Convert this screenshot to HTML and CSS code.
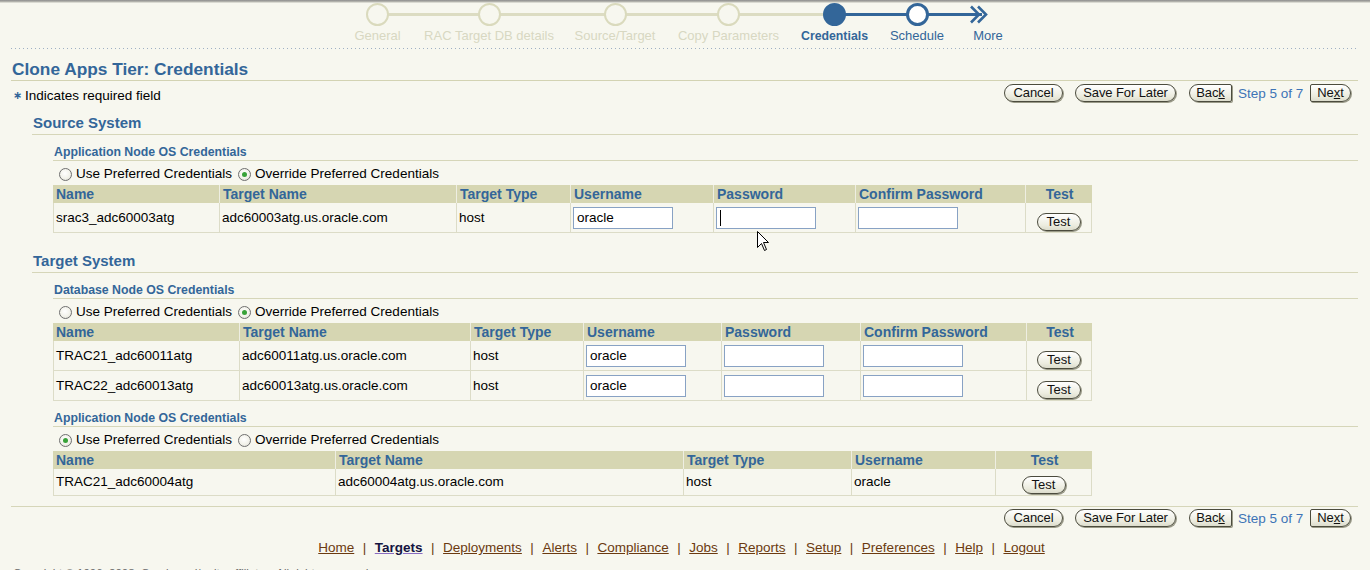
FILE: index.html
```html
<!DOCTYPE html>
<html>
<head>
<meta charset="utf-8">
<title>Clone Apps Tier: Credentials</title>
<link rel="stylesheet" href="styles.css">
</head>
<body>
<div class="train">
  <div class="steps">
    <div class="step s1 done first"><span class="dot"></span><span class="lbl">General</span></div>
    <div class="step s2 done"><span class="dot"></span><span class="lbl">RAC Target DB details</span></div>
    <div class="step s3 done"><span class="dot"></span><span class="lbl">Source/Target</span></div>
    <div class="step s4 done"><span class="dot"></span><span class="lbl">Copy Parameters</span></div>
    <div class="step s5 current"><span class="dot"></span><span class="lbl">Credentials</span></div>
    <div class="step s6 next"><span class="dot"></span><span class="lbl">Schedule</span></div>
    <div class="step s7 more">
      <svg class="chev" width="20" height="23" viewBox="0 0 20 23"><path d="M2 3.5 L10 11.5 L2 19.5 M9 3.5 L17 11.5 L9 19.5" fill="none" stroke="#336699" stroke-width="2.6"/></svg>
      <span class="lbl">More</span>
    </div>
  </div>
</div>
<div class="dots"></div>

<div class="page">
  <h1 class="title">Clone Apps Tier: Credentials</h1>
  <div class="actions top">
    <div class="req"><span class="star">&#8727;</span>Indicates required field</div>
    <div class="btns">
      <span class="btn cancel">Cancel</span>
      <span class="btn save">Save For Later</span>
      <div class="nav">
        <span class="btn back">Bac<u>k</u></span>
        <span class="stepof">Step 5 of 7</span>
        <span class="btn nxt">Ne<u>x</u>t</span>
      </div>
    </div>
  </div>

  <h2 class="sec first-sec">Source System</h2>
  <div class="subsec">
    <h3 class="sub">Application Node OS Credentials</h3>
    <div class="radios">
      <label class="rad"><span class="r"></span>Use Preferred Credentials</label>
      <label class="rad"><span class="r on"></span>Override Preferred Credentials</label>
    </div>
    <table class="grid">
      <colgroup><col class="w167"><col class="w237"><col class="w114"><col class="w143"><col class="w142"><col class="w170"><col class="w66"></colgroup>
      <tr><th>Name</th><th>Target Name</th><th>Target Type</th><th>Username</th><th>Password</th><th>Confirm Password</th><th class="c">Test</th></tr>
      <tr class="tall"><td>srac3_adc60003atg</td><td>adc60003atg.us.oracle.com</td><td>host</td><td><span class="inp">oracle</span></td><td><span class="inp"><span class="caret"></span></span></td><td><span class="inp"></span></td><td class="test"><span class="tbtn">Test</span></td></tr>
    </table>
  </div>

  <h2 class="sec">Target System</h2>
  <div class="subsec">
    <h3 class="sub">Database Node OS Credentials</h3>
    <div class="radios">
      <label class="rad"><span class="r"></span>Use Preferred Credentials</label>
      <label class="rad"><span class="r on"></span>Override Preferred Credentials</label>
    </div>
    <table class="grid">
      <colgroup><col class="w187"><col class="w231"><col class="w113"><col class="w138"><col class="w139"><col class="w166"><col class="w65"></colgroup>
      <tr><th>Name</th><th>Target Name</th><th>Target Type</th><th>Username</th><th>Password</th><th>Confirm Password</th><th class="c">Test</th></tr>
      <tr class="tall"><td>TRAC21_adc60011atg</td><td>adc60011atg.us.oracle.com</td><td>host</td><td><span class="inp">oracle</span></td><td><span class="inp"></span></td><td><span class="inp"></span></td><td class="test"><span class="tbtn">Test</span></td></tr>
      <tr class="tall"><td>TRAC22_adc60013atg</td><td>adc60013atg.us.oracle.com</td><td>host</td><td><span class="inp">oracle</span></td><td><span class="inp"></span></td><td><span class="inp"></span></td><td class="test"><span class="tbtn">Test</span></td></tr>
    </table>

    <h3 class="sub">Application Node OS Credentials</h3>
    <div class="radios">
      <label class="rad"><span class="r on"></span>Use Preferred Credentials</label>
      <label class="rad"><span class="r"></span>Override Preferred Credentials</label>
    </div>
    <table class="grid">
      <colgroup><col class="w283"><col class="w348"><col class="w168"><col class="w144"><col class="w96"></colgroup>
      <tr><th>Name</th><th>Target Name</th><th>Target Type</th><th>Username</th><th class="c">Test</th></tr>
      <tr class="short"><td>TRAC21_adc60004atg</td><td>adc60004atg.us.oracle.com</td><td>host</td><td>oracle</td><td class="test"><span class="tbtn">Test</span></td></tr>
    </table>
  </div>

  <div class="actions bottom">
    <div class="btns">
      <span class="btn cancel">Cancel</span>
      <span class="btn save">Save For Later</span>
      <div class="nav">
        <span class="btn back">Bac<u>k</u></span>
        <span class="stepof">Step 5 of 7</span>
        <span class="btn nxt">Ne<u>x</u>t</span>
      </div>
    </div>
  </div>

  <div class="links">
    <a>Home</a><span class="sep">|</span><a class="cur">Targets</a><span class="sep">|</span><a>Deployments</a><span class="sep">|</span><a>Alerts</a><span class="sep">|</span><a>Compliance</a><span class="sep">|</span><a>Jobs</a><span class="sep">|</span><a>Reports</a><span class="sep">|</span><a>Setup</a><span class="sep">|</span><a>Preferences</a><span class="sep">|</span><a>Help</a><span class="sep">|</span><a>Logout</a>
  </div>
  <div class="copy">Copyright &copy; 1996, 2008, Oracle and/or its affiliates. All rights reserved.</div>
</div>

<svg class="pointer" width="13" height="21" viewBox="0 0 13 21"><path d="M0.5 0.5 L0.5 16.5 L4.5 12.5 L7.5 19.5 L9.5 18.5 L6.5 11.5 L11.5 11.5 Z" fill="#fff" stroke="#000" stroke-width="1"/></svg>
</body>
</html>
```
FILE: styles.css
```css
* { box-sizing: border-box; }
html, body { margin: 0; padding: 0; }
body {
  background: #f7f7ef;
  font-family: "Liberation Sans", Arial, sans-serif;
  font-size: 13.5px;
  color: #000;
  width: 1370px;
  height: 570px;
  overflow: hidden;
  position: relative;
}

/* ---------- train ---------- */
.train {
  height: 48px;
  padding-left: 321px;
  background: linear-gradient(to bottom, #8c8c8c 0, #bdbdb5 2px, #f7f7ef 3px);
}
.steps { display: flex; height: 48px; }
.step {
  position: relative;
  display: flex;
  flex-direction: column;
  align-items: center;
}
.s1 { width: 113px; }
.s2 { width: 110px; }
.s3 { width: 142px; }
.s4 { width: 85px; }
.s5 { width: 127px; }
.s6 { width: 38px; }
.s7 { width: 104px; }
.step::before, .step::after {
  content: "";
  position: absolute;
  top: 13px;
  height: 3px;
  width: 50%;
  background: #dcdcc2;
}
.step::before { left: 0; }
.step::after { right: 0; }
.step.first::before, .step.more::after { display: none; }
.step.current::after, .step.next::before, .step.next::after, .step.more::before { background: #336699; }
.step.more::before { width: calc(50% - 6px); }
.dot {
  position: relative;
  z-index: 1;
  width: 23px;
  height: 23px;
  margin-top: 3px;
  border-radius: 50%;
  border: 2px solid #dadabd;
  background: #f7f7ef;
}
.current .dot { background: #336699; border-color: #336699; }
.next .dot { background: #fff; border: 3px solid #336699; }
.chev { position: relative; z-index: 1; margin-top: 3px; margin-right: 18px; display: block; }
.lbl {
  margin-top: 2px;
  font-size: 13px;
  line-height: 15px;
  white-space: nowrap;
  color: #d8d8c2;
}
.current .lbl { color: #336699; font-weight: bold; font-size: 12.3px; line-height: 16px; }
.next .lbl, .more .lbl { color: #336699; }
.dots {
  height: 1px;
  margin: 0 12px 0 11px;
  background-image: linear-gradient(to right, #9fb0c4 1px, transparent 1px);
  background-size: 4px 1px;
}

/* ---------- page ---------- */
.page { padding: 0 12px 0 11px; }
.title {
  margin: 0;
  padding: 10px 0 1px 1px;
  font-size: 17.3px;
  line-height: 20px;
  font-weight: bold;
  color: #336699;
  border-bottom: 1px solid #d3d3b3;
}
.actions { display: flex; justify-content: space-between; align-items: flex-start; }
.actions.top { margin-top: 3px; }
.req { padding: 4px 0 0 2px; line-height: 16px; display: flex; align-items: center; }
.star { color: #336699; font-family: "DejaVu Sans", sans-serif; font-size: 11px; width: 12px; font-weight: bold; }
.btns { display: flex; align-items: center; margin-right: 7px; margin-left: auto; }
.btn.cancel { width: 59px; }
.btn.save { width: 101px; margin-left: 12px; }
.nav { display: flex; align-items: center; gap: 6px; margin-left: 13px; }
.btn {
  display: inline-flex;
  align-items: center;
  justify-content: center;
  height: 18px;
  padding: 0;
  border: 1px solid #4b4b3d;
  border-radius: 9px;
  background: linear-gradient(#ffffff, #ececdf 70%, #dcdccc);
  box-shadow: 1px 1px 0 #9a9a88;
  font-size: 13px;
  letter-spacing: -0.1px;
  line-height: 16px;
  color: #111;
  white-space: nowrap;
}
.btn.back { width: 43px; border-radius: 9px 2px 2px 9px; }
.btn.nxt { width: 41px; border-radius: 2px 9px 9px 2px; }
.btn u { text-decoration: underline; text-underline-offset: 1px; }
.stepof { color: #3d74b6; font-size: 13.5px; width: 66px; white-space: nowrap; }

.sec {
  margin: 19px 0 0 21px;
  padding: 0 0 2px 1px;
  font-size: 15px;
  line-height: 18px;
  font-weight: bold;
  color: #336699;
  border-bottom: 1px solid #d6d6b9;
}
.sec.first-sec { margin-top: 10px; }
.subsec { margin-left: 42px; }
.sub {
  margin: 10px 0 0 0;
  padding: 0 0 0 1px;
  font-size: 12.3px;
  line-height: 15px;
  font-weight: bold;
  color: #336699;
  border-bottom: 1px solid #d6d6b9;
}
.radios { display: flex; align-items: center; margin: 4px 0 2px 6px; height: 18px; line-height: 18px; }
.rad { display: flex; align-items: center; margin-right: 6px; white-space: nowrap; }
.r {
  width: 13px;
  height: 13px;
  margin-right: 4px;
  border-radius: 50%;
  border: 1px solid #6f6f6f;
  background: radial-gradient(circle at 45% 40%, #ffffff 0, #f2f2ea 55%, #d8d8d0 100%);
  display: flex;
  align-items: center;
  justify-content: center;
}
.r.on::after {
  content: "";
  width: 5px;
  height: 5px;
  border-radius: 50%;
  background: #38a238;
}

/* ---------- tables ---------- */
.grid {
  width: 1039px;
  table-layout: fixed;
  border-collapse: separate;
  border-spacing: 0;
}
.w167 { width: 167px; } .w237 { width: 237px; } .w114 { width: 114px; } .w143 { width: 143px; }
.w142 { width: 142px; } .w170 { width: 170px; } .w66 { width: 66px; }
.w187 { width: 187px; } .w231 { width: 231px; } .w113 { width: 113px; } .w138 { width: 138px; }
.w139 { width: 139px; } .w166 { width: 166px; } .w65 { width: 65px; }
.w283 { width: 283px; } .w348 { width: 348px; } .w168 { width: 168px; } .w144 { width: 144px; } .w96 { width: 96px; }
.grid th {
  height: 18px;
  padding: 0 2px 0 3px;
  background: #d6d6b2;
  border-right: 1px solid #eeeee2;
  text-align: left;
  font-size: 14px;
  line-height: 18px;
  font-weight: bold;
  color: #336699;
  white-space: nowrap;
}
.grid th:last-child { border-right: 0; }
.grid th.c { text-align: center; }
.grid td {
  padding: 0 2px;
  border-right: 1px solid #dcdcc7;
  border-bottom: 1px solid #dcdcc7;
  vertical-align: middle;
  white-space: nowrap;
  line-height: 16px;
}
.grid td:first-child { border-left: 1px solid #dcdcc7; }
.grid tr.tall td { height: 30px; }
.grid tr.short td { height: 27px; }
.grid td.test { text-align: center; vertical-align: bottom; padding-bottom: 1px; }
.inp {
  display: inline-flex;
  align-items: center;
  vertical-align: middle;
  width: 100px;
  height: 22px;
  padding-left: 3px;
  background: #fff;
  border: 1px solid #88a2c4;
  font-size: 13.5px;
}
.caret { width: 1px; height: 16px; background: #000; }
.tbtn {
  display: inline-flex;
  align-items: center;
  justify-content: center;
  width: 44px;
  height: 18px;
  border: 1px solid #4b4b3d;
  border-radius: 9px;
  background: linear-gradient(#ffffff, #ececdf 70%, #dcdccc);
  box-shadow: 1px 1px 0 #9a9a88;
  font-size: 13px;
  color: #111;
}

/* ---------- footer ---------- */
.actions.bottom {
  margin-top: 10px;
  padding-top: 2px;
  border-top: 1px solid #d6d6b9;
}
.links {
  margin-top: 13px;
  text-align: center;
  line-height: 16px;
  font-size: 13.5px;
  padding-right: 6px;
}
.links a { color: #6b3a10; text-decoration: underline; }
.links a.cur { color: #141440; font-weight: bold; text-decoration-color: #8a6cc0; }
.sep { color: #6b3a10; padding: 0 8.5px; }
.copy { margin-top: 10px; padding-left: 2px; font-size: 11.5px; line-height: 14px; color: #6a6a6a; }

.pointer { position: absolute; left: 757px; top: 231px; }
```
